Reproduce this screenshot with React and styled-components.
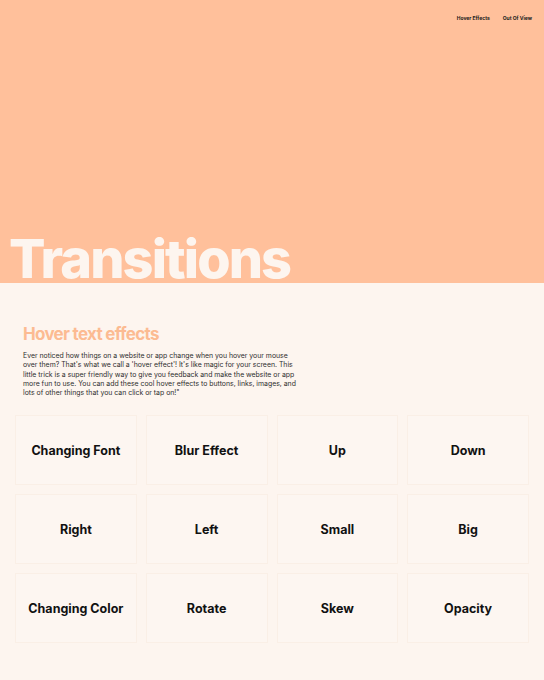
import React from "react";
import styled, { createGlobalStyle } from "styled-components";

const GlobalStyle = createGlobalStyle`
  html, body {
    margin: 0;
    padding: 0;
    background: #fdf5ef;
  }
  body {
    font-family: "Inter", "Liberation Sans", sans-serif;
  }
`;

const Hero = styled.header`
  background: #ffc09b;
  height: 283px;
  display: flex;
  flex-direction: column;
  justify-content: space-between;
`;

const Nav = styled.nav`
  display: flex;
  justify-content: flex-end;
  gap: 13px;
  padding: 15px 12px 0 0;
`;

const NavLink = styled.a`
  font-size: 5px;
  font-weight: 700;
  color: #1a1a1a;
  text-decoration: none;
`;

const Title = styled.h1`
  margin: 0 0 -3px 9px;
  font-size: 54px;
  font-weight: 800;
  letter-spacing: -1.9px;
  line-height: 1;
  color: #fdf5ef;
  white-space: nowrap;
`;

const Section = styled.section`
  padding: 40px 15px 38px;
`;

const Intro = styled.div`
  padding: 0 8px;
  max-width: 276px;
`;

const Heading = styled.h2`
  margin: 0;
  font-size: 17px;
  font-weight: 700;
  letter-spacing: -0.7px;
  color: #fcbb92;
  line-height: 22px;
`;

const Text = styled.p`
  margin: 6px 0 0;
  font-size: 6.9px;
  line-height: 9.3px;
  color: #2e2e2e;
`;

const Grid = styled.div`
  margin-top: 18px;
  display: grid;
  grid-template-columns: repeat(4, 1fr);
  grid-auto-rows: 70px;
  gap: 9px;
`;

const Card = styled.div`
  display: flex;
  align-items: center;
  justify-content: center;
  background: #fdf6f1;
  border: 1px solid #faefe6;
  font-size: 12.5px;
  font-weight: 700;
  color: #111;
`;

const effects = [
  "Changing Font",
  "Blur Effect",
  "Up",
  "Down",
  "Right",
  "Left",
  "Small",
  "Big",
  "Changing Color",
  "Rotate",
  "Skew",
  "Opacity",
];

export default function App() {
  return (
    <>
      <GlobalStyle />
      <Hero>
        <Nav>
          <NavLink href="#hover">Hover Effects</NavLink>
          <NavLink href="#view">Out Of View</NavLink>
        </Nav>
        <Title>Transitions</Title>
      </Hero>
      <Section id="hover">
        <Intro>
          <Heading>Hover text effects</Heading>
          <Text>
            Ever noticed how things on a website or app change when you hover
            your mouse over them? That's what we call a 'hover effect'! It's
            like magic for your screen. This little trick is a super friendly
            way to give you feedback and make the website or app more fun to
            use. You can add these cool hover effects to buttons, links,
            images, and lots of other things that you can click or tap on!"
          </Text>
        </Intro>
        <Grid>
          {effects.map((name) => (
            <Card key={name}>{name}</Card>
          ))}
        </Grid>
      </Section>
    </>
  );
}
